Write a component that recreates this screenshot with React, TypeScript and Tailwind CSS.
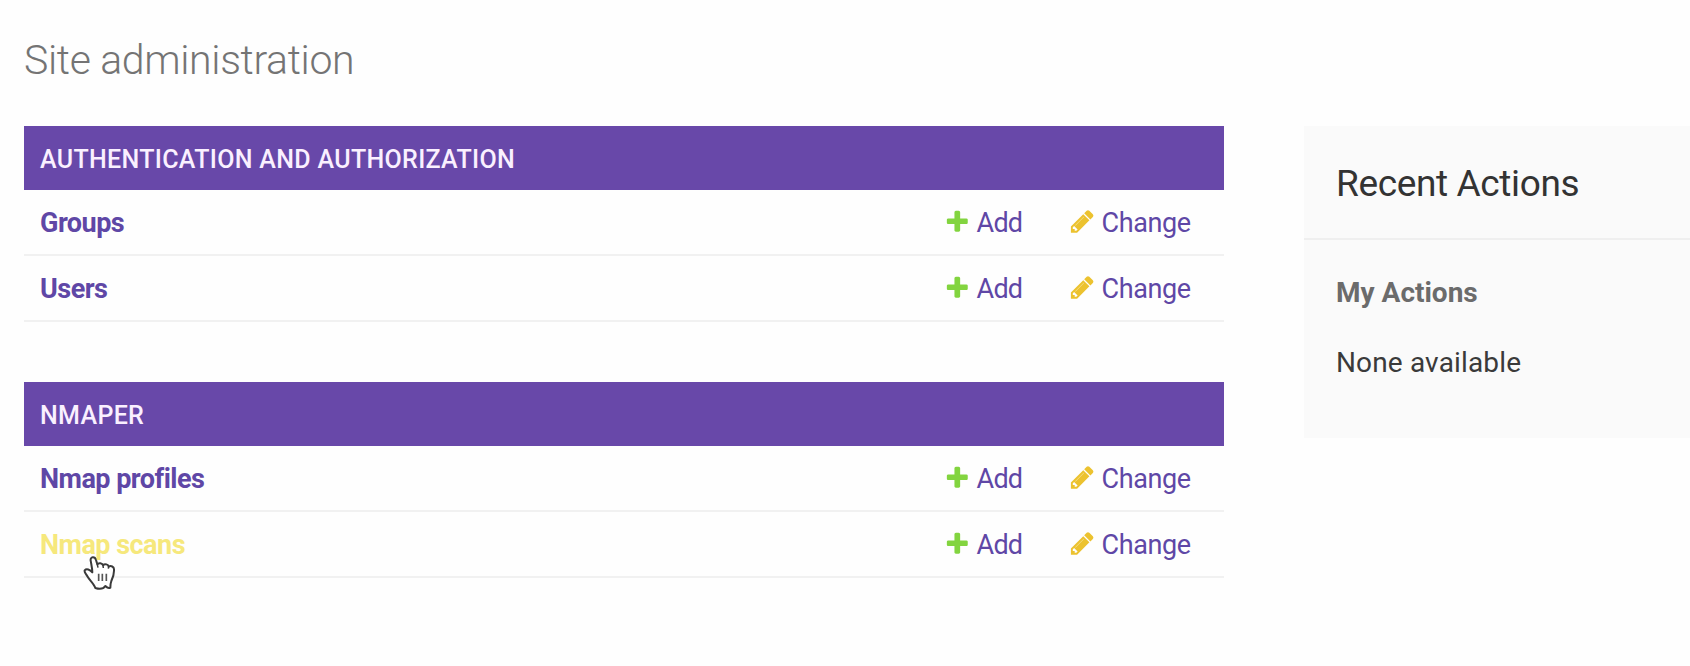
const PlusIcon = () => (
  <svg viewBox="0 0 1792 1792" className="-mt-[2px] size-[26.6px] shrink-0 fill-[#82d43f]">
    <path d="M1600 796v192q0 40-28 68t-68 28h-416v416q0 40-28 68t-68 28h-192q-40 0-68-28t-28-68v-416h-416q-40 0-68-28t-28-68v-192q0-40 28-68t68-28h416v-416q0-40 28-68t68-28h192q40 0 68 28t28 68v416h416q40 0 68 28t28 68z" />
  </svg>
);

const PencilIcon = () => (
  <svg viewBox="0 0 1792 1792" className="-mt-[2px] size-[26.6px] shrink-0 fill-[#ecc22f]">
    <path d="M420 1150L1000 570" stroke="#f2d464" strokeWidth="90" />
    <path d="M491 1536l91-91-235-235-91 91v107h128v128h107zm523-928q0-22-22-22-10 0-17 7l-542 542q-7 7-7 17 0 22 22 22 10 0 17-7l542-542q7-7 7-17zm-54-192l416 416-832 832h-416v-416zm683 96q0 53-37 90l-166 166-416-416 166-165q36-38 90-38 53 0 91 38l235 234q37 39 37 91z" />
  </svg>
);

const HandCursor = () => (
  <svg viewBox="69 75 102 108" className="absolute left-[43px] top-[32px] h-9 w-[34px]">
    <path
      d="M92 92C90 79 105 79 108 90L112 103C116 97 127 99 129 106C134 100 145 103 146 110C153 106 162 110 162 118C163 132 159 142 154 153C151 161 151 168 151 173C145 177 140 172 136 168C131 176 119 178 106 174C102 161 88 150 82 139C79 132 72 128 74 121C79 115 90 118 97 127C97 116 94 104 92 92Z"
      fill="#fff"
      stroke="#3a3a3a"
      strokeWidth="6"
      strokeLinejoin="round"
    />
    <path d="M112 103L114 113M129 106L130 114M146 110L145 116" stroke="#3a3a3a" strokeWidth="4.5" />
    <path d="M116 131V153M127 131V153M139 131V153" stroke="#555" strokeWidth="5" />
  </svg>
);

type Item = { name: string; hovered?: boolean };

const Module = ({ title, items }: { title: string; items: Item[] }) => (
  <section className="w-[1200px]">
    <h2 className="flex h-16 items-center bg-[#6848a9] pl-4 pt-[3px] text-[25px] font-medium uppercase tracking-[0.33px] text-[#faf0ff]">
      {title}
    </h2>
    {items.map((item) => (
      <div
        key={item.name}
        className="flex h-[66px] items-center border-b-2 border-[#f1f1f1] pl-4 text-[27px] tracking-[-0.52px] text-[#5f47a6]"
      >
        <div className="relative w-[904px] pt-[2px]">
          <a className={item.hovered ? "font-bold text-[#f6e87c]" : "font-bold"}>{item.name}</a>
          {item.hovered && <HandCursor />}
        </div>
        <a className="flex w-[125px] items-center gap-[6px]">
          <PlusIcon />
          <span className="pt-[2px] tracking-[-0.8px]">Add</span>
        </a>
        <a className="flex items-center gap-[6px]">
          <PencilIcon />
          <span className="pt-[2px] tracking-[-0.4px]">Change</span>
        </a>
      </div>
    ))}
  </section>
);

export default function App() {
  return (
    <div className="h-[666px] overflow-hidden bg-[#fefefe] pl-6 font-['Roboto',sans-serif]">
      <h1 className="flex h-[126px] items-start pt-[36px] text-[41px] font-light leading-[48px] tracking-[-0.35px] text-[#747474]">
        Site administration
      </h1>
      <div className="flex items-start gap-20">
        <main className="flex flex-col gap-[60px]">
          <Module
            title="Authentication and Authorization"
            items={[{ name: "Groups" }, { name: "Users" }]}
          />
          <Module
            title="Nmaper"
            items={[{ name: "Nmap profiles" }, { name: "Nmap scans", hovered: true }]}
          />
        </main>
        <aside className="h-[312px] flex-1 bg-[#fafafa]">
          <h2 className="flex h-[114px] items-center border-b-2 border-[#efefef] pl-8 pt-[4px] text-[37px] tracking-[-0.37px] text-[#333]">
            Recent Actions
          </h2>
          <h3 className="pl-8 pt-[35px] text-[28px] font-bold leading-[36px] text-[#6b6b6b]">My Actions</h3>
          <p className="pl-8 pt-[34px] text-[28px] leading-[36px] tracking-[0.15px] text-[#3a3a3a]">None available</p>
        </aside>
      </div>
    </div>
  );
}
